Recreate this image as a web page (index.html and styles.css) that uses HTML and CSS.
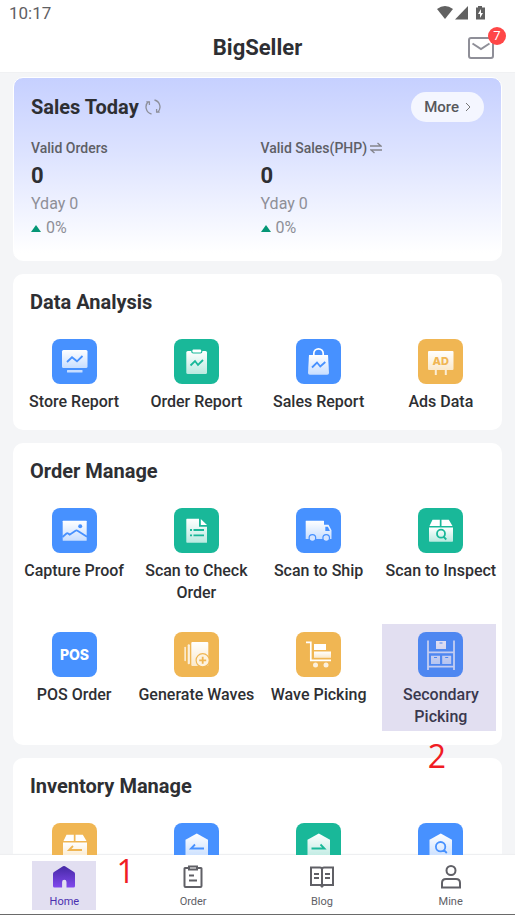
FILE: index.html
```html
<!DOCTYPE html>
<html lang="en">
<head>
<meta charset="utf-8">
<meta name="viewport" content="width=device-width, initial-scale=1">
<title>BigSeller</title>
<link rel="stylesheet" href="styles.css">
</head>
<body>
<svg class="defs" width="0" height="0" aria-hidden="true">
  <defs>
    <linearGradient id="fade" x1="0" y1="0" x2="0" y2="1">
      <stop offset="0" stop-color="#fff"/>
      <stop offset="1" stop-color="#fff" stop-opacity=".7"/>
    </linearGradient>
    <linearGradient id="violet" x1="0" y1="0" x2="0" y2="1">
      <stop offset="0" stop-color="#4529a5"/>
      <stop offset="1" stop-color="#8149ed"/>
    </linearGradient>
  </defs>
</svg>

<header class="top">
  <div class="status">
    <span>10:17</span>
    <svg class="status-icons" width="50" height="16" viewBox="0 0 50 16" fill="#616161" aria-hidden="true">
      <path d="M0 4Q8-2 16 4L8 14Z"/>
      <path d="M31 1V14.500H18Z"/>
      <path d="M41 1h4v1.500h3V14.500h-9V2.500h2z"/>
      <path d="M44 4l-3 5h2v4l3-5h-2z" fill="#fff"/>
    </svg>
  </div>
  <div class="titlebar">
    <h1>BigSeller</h1>
    <button class="mail" type="button" aria-label="Messages">
      <svg width="26" height="22" viewBox="0 0 26 22" fill="none" stroke="#8f8f98" stroke-width="2" aria-hidden="true">
        <rect x="1" y="1" width="24" height="20" rx="2"/>
        <path d="M4.500 6.500L13 12l8.500-5.500"/>
      </svg>
      <span class="count">7</span>
    </button>
  </div>
</header>

<main class="content">
  <section class="card sales">
    <div class="sales-head">
      <h2>Sales Today</h2>
      <button class="plain" type="button" aria-label="Refresh">
        <svg width="16" height="16" viewBox="0 0 16 16" fill="none" stroke="#8d8f9a" stroke-width="1.300" aria-hidden="true">
          <path d="M6.500 15A7.200 7.200 0 0 1 3.600 2.500M1.300 2.800H4.400V6M9.500 1A7.200 7.200 0 0 1 12.400 13.500M14.700 13.200H11.600V10"/>
        </svg>
      </button>
      <a class="more" href="#more">More
        <svg width="6" height="10" viewBox="0 0 6 10" fill="none" stroke="#777" aria-hidden="true"><path d="M1 1l4 4-4 4"/></svg>
      </a>
    </div>
    <div class="stats">
      <div class="stat">
        <span class="stat-name">Valid Orders</span>
        <strong>0</strong>
        <span class="stat-sub">Yday 0</span>
        <span class="stat-sub"><i class="up"></i>0%</span>
      </div>
      <div class="stat">
        <span class="stat-name">Valid Sales(PHP)
          <svg width="12" height="12" viewBox="0 0 12 12" fill="none" stroke="#85858c" stroke-width="1.300" aria-hidden="true"><path d="M0 4h11L7.500 1M12 8H1l3.500 3"/></svg>
        </span>
        <strong>0</strong>
        <span class="stat-sub">Yday 0</span>
        <span class="stat-sub"><i class="up"></i>0%</span>
      </div>
    </div>
  </section>

  <section class="card">
    <h2>Data Analysis</h2>
    <div class="grid">
      <a class="item" href="#store">
        <svg class="tile blue" viewBox="0 0 45 45" aria-hidden="true">
          <rect x="10" y="11" width="25.500" height="18" rx="1.500" fill="url(#fade)"/>
          <rect x="15" y="31" width="15.500" height="2.600" rx=".5" fill="#fff" opacity=".7"/>
          <path class="ink" d="M15 23l5-4.700 5 4L30.500 17"/>
        </svg>
        <span>Store Report</span>
      </a>
      <a class="item" href="#orders">
        <svg class="tile green" viewBox="0 0 45 45" aria-hidden="true">
          <rect x="12.300" y="12" width="20.700" height="23" rx="1.500" fill="url(#fade)"/>
          <rect class="cut" x="17.800" y="10" width="10" height="4" rx="1.500" fill="#fff"/>
          <path class="ink" d="M16.500 26.500l4.500-4.500 3 4 5-5"/>
        </svg>
        <span>Order Report</span>
      </a>
      <a class="item" href="#sales">
        <svg class="tile blue" viewBox="0 0 45 45" aria-hidden="true">
          <path d="M17.800 17v-2.500a4.700 4.700 0 0 1 9.400 0V17" fill="none" stroke="#fff" stroke-width="1.700"/>
          <path d="M13 16h19l1 18q0 1.800-1.800 1.800H13.800Q12 35.800 12 34z" fill="url(#fade)"/>
          <path class="ink" d="M16 28.500l5-5 3.300 4 5-4.500"/>
        </svg>
        <span>Sales Report</span>
      </a>
      <a class="item" href="#ads">
        <svg class="tile amber" viewBox="0 0 45 45" aria-hidden="true">
          <rect x="10" y="12" width="25.500" height="19" rx="1" fill="url(#fade)"/>
          <path d="M17.800 31v5M27.800 31v5" stroke="#fff" stroke-width="2" opacity=".75"/>
          <text class="ad" x="22.700" y="26">AD</text>
        </svg>
        <span>Ads Data</span>
      </a>
    </div>
  </section>

  <section class="card">
    <h2>Order Manage</h2>
    <div class="grid">
      <a class="item" href="#proof">
        <svg class="tile blue" viewBox="0 0 45 45" aria-hidden="true">
          <rect x="10.700" y="12.700" width="24" height="20" rx=".5" fill="url(#fade)"/>
          <circle class="solid" cx="28.200" cy="18.300" r="2"/>
          <path class="ink" d="M10.500 29l4-3.500q.8-.6 1.600 0l1.600 1.200 5.800-4q1-.7 2 0L35 28.800"/>
        </svg>
        <span>Capture Proof</span>
      </a>
      <a class="item" href="#check">
        <svg class="tile green" viewBox="0 0 45 45" aria-hidden="true">
          <path d="M13 10.700h12v8h8v15.500q0 .5-.5.500H13q-.7 0-.7-.7V11.400q0-.7.7-.7z" fill="url(#fade)"/>
          <path d="M26.800 11l6.200 6h-6.200z" fill="#fff"/>
          <path class="ink" d="M16 22h2M19.500 22H30M16 27.300h2M19.500 27.300H30"/>
        </svg>
        <span>Scan to Check Order</span>
      </a>
      <a class="item" href="#ship">
        <svg class="tile blue" viewBox="0 0 45 45" aria-hidden="true">
          <path d="M10 12.700h17.500q.5 0 .5.500v3.500h4.500l3 5.500V31H9.700V13z" fill="url(#fade)"/>
          <path class="solid" d="M29.300 18.700h2.600l2 4.300h-4.600z"/>
          <circle class="cut" cx="16.400" cy="30" r="3.300" fill="#d4e4ff"/>
          <circle class="cut" cx="30.200" cy="30" r="3.300" fill="#d4e4ff"/>
        </svg>
        <span>Scan to Ship</span>
      </a>
      <a class="item" href="#inspect">
        <svg class="tile green" viewBox="0 0 45 45" aria-hidden="true">
          <path d="M14.500 11.700h7.300V18H11.500zM23.500 11.700h7.300L34.500 18h-11z" fill="#fff"/>
          <path d="M11 19.500h24V33q0 .8-.8.800H11.800q-.8 0-.8-.8z" fill="url(#fade)"/>
          <path class="ink" d="M25.800 29l2.500 2.500M27 25.700a4 4 0 1 1-8 0 4 4 0 1 1 8 0z"/>
        </svg>
        <span>Scan to Inspect</span>
      </a>
      <a class="item" href="#pos">
        <svg class="tile blue" viewBox="0 0 45 45" aria-hidden="true">
          <text class="pos" x="22.500" y="28">POS</text>
        </svg>
        <span>POS Order</span>
      </a>
      <a class="item" href="#waves">
        <svg class="tile amber" viewBox="0 0 45 45" aria-hidden="true">
          <rect x="10.300" y="14.700" width="1.700" height="14.500" rx=".8" fill="#fff" opacity=".7"/>
          <rect x="13.700" y="12.300" width="2.200" height="20" rx="1" fill="#fff" opacity=".8"/>
          <rect x="17.300" y="10" width="17" height="24" rx="1" fill="url(#fade)"/>
          <circle class="cut" cx="28.700" cy="28.300" r="6.600" fill="#fdf3e0"/>
          <path class="ink" d="M25.200 28.300h7M28.700 24.800v7"/>
        </svg>
        <span>Generate Waves</span>
      </a>
      <a class="item" href="#wave-picking">
        <svg class="tile amber" viewBox="0 0 45 45" aria-hidden="true">
          <path d="M10 10.400h4.800v18H35" fill="none" stroke="#fff" stroke-width="1.700"/>
          <rect x="18" y="12" width="12" height="6" fill="#fff"/>
          <rect x="18" y="19.500" width="17" height="6.300" fill="url(#fade)"/>
          <circle cx="19.500" cy="33" r="2.500" fill="#fff" opacity=".8"/>
          <circle cx="30" cy="33" r="2.500" fill="#fff" opacity=".8"/>
        </svg>
        <span>Wave Picking</span>
      </a>
      <a class="item marked" href="#secondary-picking">
        <svg class="tile blue" viewBox="0 0 45 45" aria-hidden="true">
          <path d="M10 8.500V38M36 8.500V38M10 20.300h26M10 34.700h26" stroke="#fff" stroke-width="1.800" opacity=".8"/>
          <path d="M18 9h10v8H18zM13 23.700h9V32h-9zM24.200 23.700h9V32h-9z" fill="url(#fade)"/>
          <path class="ink thin" d="M21.500 11h3M16 25.500h3M27.200 25.500h3"/>
        </svg>
        <span>Secondary Picking</span>
        <b class="note note-below">2</b>
      </a>
    </div>
  </section>

  <section class="card">
    <h2>Inventory Manage</h2>
    <div class="grid">
      <a class="item" href="#box-in" aria-label="Box in">
        <svg class="tile amber" viewBox="0 0 45 45" aria-hidden="true">
          <path d="M14.500 11.700h7.300V18H11.500zM23.500 11.700h7.300L34.500 18h-11z" fill="#fff"/>
          <path d="M11 19.500h24V35H11z" fill="url(#fade)"/>
          <path class="ink" d="M30 27H17l4-4"/>
        </svg>
      </a>
      <a class="item" href="#stock-in" aria-label="Stock in">
        <svg class="tile blue" viewBox="0 0 45 45" aria-hidden="true">
          <path d="M11.500 16.700l11.300-6.200L34 16.700V35H11.500z" fill="url(#fade)"/>
          <path class="ink" d="M30 25.500H17l4-4"/>
        </svg>
      </a>
      <a class="item" href="#stock-out" aria-label="Stock out">
        <svg class="tile green" viewBox="0 0 45 45" aria-hidden="true">
          <path d="M11.500 16.700l11.300-6.200L34 16.700V35H11.500z" fill="url(#fade)"/>
          <path class="ink" d="M15.500 25.500h13l-4-4"/>
        </svg>
      </a>
      <a class="item" href="#stock-search" aria-label="Stock search">
        <svg class="tile blue" viewBox="0 0 45 45" aria-hidden="true">
          <path d="M11.500 16.700l11.300-6.200L34 16.700V35H11.500z" fill="url(#fade)"/>
          <path class="ink" d="M25.800 27l3 3M27.300 23.700a4.700 4.700 0 1 1-9.400 0 4.700 4.700 0 1 1 9.400 0z"/>
        </svg>
      </a>
    </div>
  </section>
</main>

<nav class="tabs">
  <a class="tab active" href="#home">
    <svg width="24" height="24" viewBox="0 0 24 24" aria-hidden="true"><path d="M12 1Q12.500 1 13 1.300L22 7q1 .7 1 2v12q0 1.500-1.500 1.500H14.500V17a2.200 2.200 0 0 0-4.400 0v5.500H2.500Q1 22.500 1 21V9q0-1.300 1-2L11 1.300Q11.500 1 12 1z" fill="url(#violet)"/></svg>
    <span>Home</span>
    <b class="note note-side">1</b>
  </a>
  <a class="tab" href="#order">
    <svg width="24" height="24" viewBox="0 0 24 24" fill="none" stroke="#606066" stroke-width="2" aria-hidden="true"><path d="M8 3H4Q3.500 3 3.500 3.500V21q0 1 1 1h15q1 0 1-1V3.500Q20.500 3 20 3h-4M8 1.500h8v3H8zM8 10.500h5M8 15.500h8"/></svg>
    <span>Order</span>
  </a>
  <a class="tab" href="#blog">
    <svg width="24" height="24" viewBox="0 0 24 24" fill="none" stroke="#606066" stroke-width="2" aria-hidden="true"><path d="M12 4.500Q12 2.500 10 2.500H1V20h9.500L12 21.500 13.500 20H23V2.500h-9Q12 2.500 12 4.500V22M4 9h5M4 13h5M15 9h5M15 13h5"/></svg>
    <span>Blog</span>
  </a>
  <a class="tab" href="#mine">
    <svg width="24" height="24" viewBox="0 0 24 24" fill="none" stroke="#606066" stroke-width="2" aria-hidden="true"><circle cx="12" cy="5.500" r="4.500"/><path d="M3 22.500V18q0-4 4-4h10q4 0 4 4v4.500z"/></svg>
    <span>Mine</span>
  </a>
</nav>
</body>
</html>
```

FILE: styles.css
```css
* {
  box-sizing: border-box;
}

body {
  display: flex;
  flex-direction: column;
  height: 100vh;
  margin: 0;
  background: #f4f5f7;
  color: #2e2f33;
  font-family: Roboto, "Liberation Sans", sans-serif;
  font-size: 16px;
}

a {
  color: inherit;
  text-decoration: none;
}

h1,
h2 {
  margin: 0;
  font-weight: 700;
}

button {
  padding: 0;
  border: 0;
  background: none;
  font: inherit;
}

svg {
  display: block;
  flex: none;
}

.defs {
  position: absolute;
}

/* Header */

.top {
  flex: none;
  background: #fff;
  border-bottom: 1px solid #f0f1f3;
}

.status {
  display: flex;
  align-items: center;
  justify-content: space-between;
  height: 26px;
  padding: 0 28px 0 9px;
  color: #5f6063;
  font-size: 17px;
}

.titlebar {
  display: grid;
  grid-template-columns: 1fr auto 1fr;
  align-items: center;
  height: 46px;
  padding: 0 21px 2px;
}

.titlebar h1 {
  grid-column: 2;
  font-size: 22px;
  line-height: 26px;
}

.mail {
  position: relative;
  justify-self: end;
}

.count {
  position: absolute;
  top: -10px;
  right: -12px;
  width: 18px;
  border-radius: 9px;
  background: #ff4747;
  color: #fff;
  font-size: 13px;
  line-height: 18px;
  text-align: center;
}

/* Cards */

.content {
  display: flex;
  flex: 1;
  flex-direction: column;
  gap: 13px;
  min-height: 0;
  padding: 4px 13px 0;
  overflow: hidden;
}

.card {
  flex: none;
  padding: 14px 0 17px;
  border-radius: 10px;
  background: #fff;
}

.card h2 {
  font-size: 20px;
  line-height: 29px;
}

.card > h2 {
  padding: 0 17px;
}

.sales {
  padding: 14px 17px 20px;
  border: 1px solid #fff;
  background: linear-gradient(#c6d0ff, #dde3ff 42%, #fff 96%);
}

.sales-head {
  display: flex;
  align-items: center;
  gap: 6px;
}

.more {
  display: flex;
  align-items: center;
  gap: 6px;
  height: 30px;
  margin-left: auto;
  padding: 0 13px;
  border-radius: 15px;
  background: #f4f6ff;
  color: #57585c;
  font-size: 15px;
  font-weight: 500;
}

.stats {
  display: grid;
  grid-template-columns: 1fr 1fr;
  column-gap: 6px;
  padding-top: 14px;
}

.stat {
  display: flex;
  flex-direction: column;
}

.stat-name {
  display: flex;
  align-items: center;
  gap: 3px;
  color: #5e5f66;
  font-size: 14px;
  font-weight: 500;
  line-height: 24px;
}

.stat strong {
  font-size: 22px;
  line-height: 32px;
}

.stat-sub {
  display: flex;
  align-items: center;
  gap: 5px;
  color: #8e8f97;
  line-height: 24px;
}

.up {
  border: solid transparent;
  border-width: 0 5px 7px;
  border-bottom-color: #059676;
}

/* Shortcut grid */

.grid {
  display: grid;
  grid-template-columns: repeat(4, 1fr);
  row-gap: 28px;
  padding-top: 22px;
}

.item {
  position: relative;
  display: flex;
  flex-direction: column;
  align-items: center;
  gap: 7px;
  font-weight: 500;
  line-height: 22px;
  text-align: center;
}

.item span {
  padding: 0 1px;
}

.tile {
  --tone: #4791ff;
  width: 45px;
  height: 45px;
  border-radius: 8px;
  background: var(--tone);
}

.green {
  --tone: #19b899;
}

.amber {
  --tone: #f0b653;
}

.ink {
  fill: none;
  stroke: var(--tone);
  stroke-width: 1.8;
}

.thin {
  stroke-width: 1.2;
}

.solid {
  fill: var(--tone);
}

.cut {
  stroke: var(--tone);
  stroke-width: 1.2;
}

.ad,
.pos {
  font-family: Inter, sans-serif;
  font-weight: 800;
  text-anchor: middle;
}

.ad {
  fill: var(--tone);
  font-size: 11px;
}

.pos {
  fill: #fff;
  font-size: 14px;
}

.marked::after {
  position: absolute;
  inset: -8px 6px -3px 2px;
  background: rgba(110, 95, 185, .2);
  content: "";
}

.note {
  position: absolute;
  color: #f01c24;
  font-family: "Open Sans", "Noto Sans", sans-serif;
  font-size: 32px;
  font-weight: 400;
  line-height: 32px;
}

.note-below {
  top: calc(100% + 12px);
  left: 48px;
}

.note-side {
  top: -6px;
  left: calc(100% + 20px);
}

/* Bottom tabs */

.tabs {
  display: grid;
  flex: none;
  grid-template-columns: repeat(4, 1fr);
  justify-items: center;
  padding: 6px 0 4px;
  border-bottom: 1px solid #6a6a6a;
  background: #fff;
  box-shadow: 0 -1px 1px #eeeff1;
}

.tab {
  position: relative;
  display: flex;
  flex-direction: column;
  align-items: center;
  gap: 5px;
  width: 64px;
  padding: 4px 0 0;
  color: #606066;
  font-size: 11px;
  line-height: 16px;
}

.active {
  background: #e2dff1;
  color: #4a2fb0;
}
```
